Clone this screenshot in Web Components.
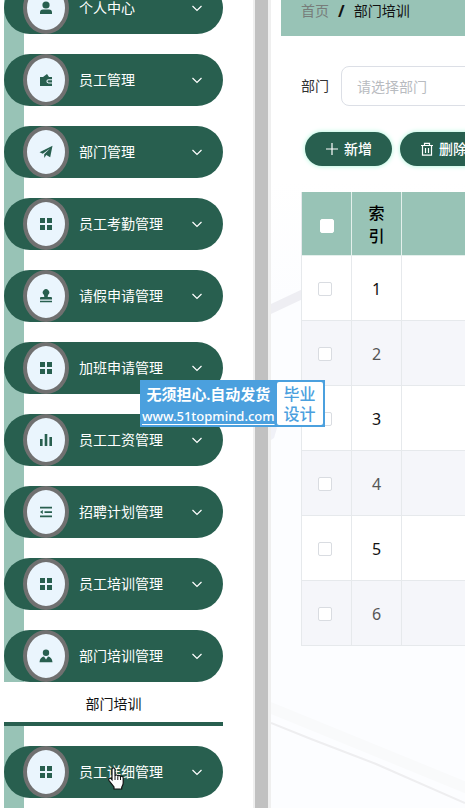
<!DOCTYPE html>
<html lang="zh-CN">
<head>
<meta charset="utf-8">
<meta name="viewport" content="width=device-width, initial-scale=1">
<title>部门培训</title>
<style>
:root{--green:#285f4f;--mint:#98c3b6;--line:#e6e9ec}
body{margin:0;background:#fff;color:#111;font:14px/20px "Noto Sans","Noto Sans CJK SC",sans-serif}
</style>
</head>
<body>
<app-shell>
  <side-menu slot="side">
    <menu-item icon="user" label="个人中心"></menu-item>
    <menu-item icon="wallet" label="员工管理"></menu-item>
    <menu-item icon="plane" label="部门管理"></menu-item>
    <menu-item icon="grid" label="员工考勤管理"></menu-item>
    <menu-item icon="stamp" label="请假申请管理"></menu-item>
    <menu-item icon="grid" label="加班申请管理"></menu-item>
    <menu-item icon="bars" label="员工工资管理"></menu-item>
    <menu-item icon="list" label="招聘计划管理"></menu-item>
    <menu-item icon="grid" label="员工培训管理"></menu-item>
    <menu-item icon="person" label="部门培训管理" child="部门培训"></menu-item>
    <menu-item icon="grid" label="员工详细管理"></menu-item>
  </side-menu>
  <page-crumb home="首页">部门培训</page-crumb>
  <search-field label="部门" hint="请选择部门"></search-field>
  <tool-bar>
    <action-button icon="plus">新增</action-button>
    <action-button icon="trash">删除</action-button>
  </tool-bar>
  <data-table rows="6" heading="索引"></data-table>
</app-shell>
<promo-badge></promo-badge>
<hand-pointer></hand-pointer>

<script>
const ICONS = {
  user: '<circle cx="7" cy="4" r="3.6"/><path d="M1 13v-1.600a3 3 0 0 1 3-3h6a3 3 0 0 1 3 3V13z"/>',
  wallet: '<path d="M1 4h3l4-3 2 3h3v2.200H9.500a2.100 2.100 0 0 0 0 4.200H13V13H1z"/><path d="M9.600 7.200H13v2.200H9.600a1.100 1.100 0 0 1 0-2.200z"/>',
  plane: '<path d="M.5 7.200 13.500.8 11.200 12.300 7.300 10 5.200 13V9.300L11 3.500 3.800 8.700z"/>',
  grid: '<path d="M1 1h5v5H1zM8 1h5v5H8zM1 8h5v5H1zM8 8h5v5H8z"/>',
  stamp: '<path d="M5.300 8 5 6a3.200 3.200 0 1 1 4 0l-.3 2H12a1 1 0 0 1 1 1v1.500H1V9a1 1 0 0 1 1-1zM1 11.800h12v1.400H1z"/>',
  bars: '<path d="M1 6h2.600v7H1zM5.700 1h2.600v12H5.700zM10.400 4H13v9h-2.600z"/>',
  list: '<path d="M1 1.800h12v1.700H1zM5.500 6.200H13v1.700H5.500zM1 10.600h12v1.700H1zM1 7l2.800-2v4z"/>',
  person: '<circle cx="7" cy="3.800" r="3.200"/><path d="M.5 13.200C.8 9.800 2.500 8 5 7.600l2 2.800 2-2.800c2.500.4 4.200 2.200 4.500 5.600z"/>',
  plus: '<path d="M7 1v12M1 7h12" fill="none" stroke="currentColor" stroke-width="1.200"/>',
  trash: '<path d="M1 3.500h12M4.500 3.500V1.300h5v2.200M2.500 3.500v9.700h9V3.500M5.500 6v5M8.500 6v5" fill="none" stroke="currentColor" stroke-width="1.200"/>'
};
const icon = (name, size) => `<svg width="${size}" height="${size}" viewBox="0 0 14 14" fill="currentColor" aria-hidden="true">${ICONS[name]}</svg>`;

function define(tag, markup) {
  customElements.define(tag, class extends HTMLElement {
    connectedCallback() {
      if (this.shadowRoot) return;
      this.attachShadow({mode: 'open'}).innerHTML = markup(this);
    }
  });
}

define('app-shell', () => `<style>
:host{display:grid;grid-template-columns:253px 18px minmax(0,1fr);height:100vh;overflow:hidden}
.side{overflow:hidden;min-height:0}
.track{background:#c1c1c1;border:solid #efefef;border-width:0 3px 0 2px}
main{position:relative;min-width:0;overflow:hidden;padding-left:10px;background:linear-gradient(#fff 180px,#fcfdff 300px)}
.decor{position:absolute;left:0;top:0;z-index:0}
.content{position:relative;z-index:1}
</style>
<div class="side"><slot name="side"></slot></div><div class="track"></div>
<main><svg class="decor" width="100%" height="808" aria-hidden="true">
<path d="M0 304 34 288v10L0 314z" fill="#eeeef3"/><path d="M0 421l6 7-3 10-3 2z" fill="#f0f1f7"/>
<path d="M0 702 196 782v12L0 714z" fill="#f9fafb"/><path d="M0 723 40 739 105 764 194 803" fill="none" stroke="#eeeef0" stroke-width="2"/></svg>
<div class="content"><slot></slot></div></main>`);

define('side-menu', () => `<style>
:host{display:block;margin:-18px 30px 0 4px;background:linear-gradient(var(--mint),var(--mint)) 0 0/20px 100% no-repeat}
nav{display:grid;gap:20px;padding-bottom:20px}
</style><nav><slot></slot></nav>`);

define('menu-item', el => `<style>
:host{display:block}
button{display:flex;align-items:center;width:100%;height:52px;padding:0 19px;border:0;border-radius:26px;background:var(--green);color:#fff;font:inherit;text-align:left}
.disc{box-sizing:border-box;display:grid;place-items:center;width:46px;height:52px;border:4px solid #707070;border-radius:50%;background:#eaf5fd;color:var(--green)}
.label{flex:1;padding-left:10px}
a{display:block;line-height:40px;padding-top:2px;height:38px;border-bottom:4px solid var(--green);background:#fff;color:#111;text-align:center;text-decoration:none}
</style>
<button type="button"><span class="disc">${icon(el.getAttribute('icon'), 14)}</span><span class="label">${el.getAttribute('label')}</span>
<svg width="14" height="14" viewBox="0 0 14 14" fill="none" stroke="#fff" stroke-width="1.200" aria-hidden="true"><path d="M2.500 5 7 9.500 11.500 5"/></svg></button>
${el.hasAttribute('child') ? `<a href="#">${el.getAttribute('child')}</a>` : ''}`);

define('page-crumb', el => `<style>
:host{display:block;background:var(--mint);height:36px}
nav{display:flex;gap:9px;padding:1px 20px 0;white-space:nowrap}
a{color:#777d7a;text-decoration:none}b{font-size:16px}
</style><nav><a href="#">${el.getAttribute('home')}</a><b>/</b><span><slot></slot></span></nav>`);

define('search-field', el => `<style>
:host{display:flex;align-items:center;gap:12px;padding:30px 0 0 20px;color:#333}
label{flex:none}
input{flex:none;box-sizing:border-box;width:200px;height:40px;padding:0 15px;border:1px solid #dcdfe6;border-radius:8px;background:#fff;font:inherit;color:#333}
input::placeholder{color:#b8bbc0;opacity:1}
</style><label for="q">${el.getAttribute('label')}</label><input id="q" type="text" placeholder="${el.getAttribute('hint')}">`);

define('tool-bar', () => `<style>:host{display:flex;gap:8px;padding:26px 0 26px 24px}</style><slot></slot>`);

define('action-button', el => `<style>
:host{display:block;flex:none}
button{display:flex;align-items:center;gap:5px;height:34px;padding:0 20px;border:0;border-radius:17px;background:var(--green);color:#fff;font:inherit;font-weight:500;white-space:nowrap;box-shadow:0 0 5px #a5f5d8}
</style><button type="button">${icon(el.getAttribute('icon'), 14)}<span><slot></slot></span></button>`);

define('data-table', el => `<style>
:host{display:block;padding-left:20px;margin-right:-20px;font-size:16px}
table{width:100%;table-layout:fixed;border-collapse:separate;border-spacing:0;border-left:1px solid var(--line)}
.narrow{width:50px}
th,td{box-sizing:border-box;padding:0;border:solid var(--line);border-width:0 1px 1px 0;text-align:center;vertical-align:middle}
th{height:64px;padding:10px 16px 7px;background:var(--mint);border-color:#e4f0ec;line-height:23px;font-weight:500;color:#000}
th.pick{padding:4px 0 0}
td{height:65px;background:#fff;padding:2px 0 0}
td.pick{padding-right:3px}
tr:nth-child(even) td{background:#f5f6fa;color:#555}
input{appearance:none;display:block;box-sizing:border-box;width:14px;height:14px;margin:0 auto;border:1px solid #d9dce1;border-radius:2px;background:#fff}
th input{border-color:#fff}
</style>
<table><colgroup><col class="narrow"><col class="narrow"><col></colgroup>
<thead><tr><th class="pick"><input type="checkbox" aria-label="全选"></th><th>${el.getAttribute('heading')}</th><th></th></tr></thead>
<tbody>${Array.from({length: +el.getAttribute('rows')}, (_, i) => `<tr><td class="pick"><input type="checkbox" aria-label="${i + 1}"></td><td>${i + 1}</td><td></td></tr>`).join('')}</tbody></table>`);

define('promo-badge', () => `<style>
:host{position:absolute;left:140px;top:380px;z-index:5;display:flex;gap:2px;box-sizing:border-box;height:47px;padding:2px;background:#4ba0de;color:#fff}
.text{display:flex;flex-direction:column;gap:2px;padding-top:3px;white-space:nowrap;align-items:center}
.slogan{font:bold 15px/20px "Liberation Serif","Noto Sans CJK SC",serif}
a{color:#fff;font:500 13px/18px "Noto Sans",sans-serif;text-decoration:underline;text-underline-offset:3px}
.box{width:46px;box-sizing:border-box;height:43px;padding-top:1px;border-radius:2px;background:#fff;color:#4ba0de;font:500 16px/20px "Noto Sans CJK SC",sans-serif;text-align:center}
.box span{display:block}
</style><div class="text"><span class="slogan">无须担心.自动发货</span><a href="#">www.51topmind.com</a></div>
<div class="box"><span>毕业</span><span>设计</span></div>`);

define('hand-pointer', () => `<style>:host{position:absolute;left:107px;top:767px;z-index:6}svg{display:block}</style>
<svg width="19" height="24" viewBox="0 0 19 24" aria-hidden="true"><path d="M5 2.500c0-2 3-2 3 0V9c.3-1.500 2.600-1.300 2.800.3.500-1.300 2.500-1 2.700.6.700-1.200 2.700-.7 2.700 1v5c0 2-1 3-1.500 4.500V22H7v-2L2 13.500c-1-1.500.8-3 2-1.800l1 1z" fill="#fff" stroke="#111" stroke-width="1.200"/><path d="M8 9v4M10.800 9.500V13M13.500 10v3" stroke="#111" fill="none"/></svg>`);
</script>
</body>
</html>
